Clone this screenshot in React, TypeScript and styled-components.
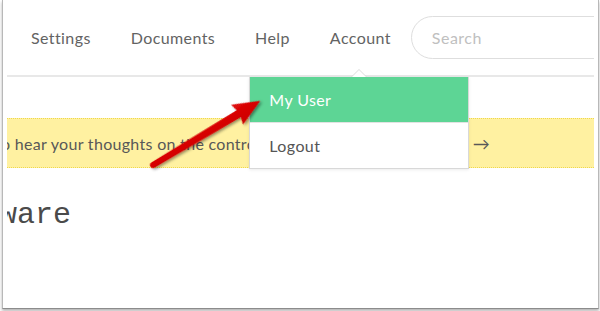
import React from "react";
import styled, { createGlobalStyle } from "styled-components";

const GlobalStyle = createGlobalStyle`
  html, body {
    margin: 0;
    padding: 0;
    background: #ffffff;
  }
  body {
    font-family: Lato, "Open Sans", "Liberation Sans", sans-serif;
  }
`;

const Stage = styled.div`
  position: relative;
  width: 600px;
  height: 311px;
  overflow: hidden;
`;

// the captured browser window: cropped on top, framed on the other sides
const Window = styled.div`
  box-sizing: border-box;
  width: 597px;
  height: 309px;
  margin-left: 2px;
  border: 1px solid #b8b8b8;
  border-top: none;
  border-bottom-color: #8c8c8c;
  box-shadow: 0 2px 3px rgba(0, 0, 0, 0.3);
  background: #fff;
  padding: 0 4px;
`;

const Page = styled.div`
  height: 100%;
  overflow: hidden;
`;

const Header = styled.header`
  display: flex;
  align-items: stretch;
  height: 75px;
  padding-left: 24px;
  border-bottom: 2px solid #e8e8e8;
`;

const Nav = styled.nav`
  display: flex;
  gap: 40px;
`;

const NavItem = styled.div`
  position: relative;
  display: flex;
  align-items: center;
  font-size: 16px;
  color: #636363;
  letter-spacing: 0.4px;
`;

const Search = styled.input`
  align-self: center;
  flex-shrink: 0;
  box-sizing: border-box;
  width: 240px;
  height: 43px;
  margin-left: 20px;
  padding: 0 20px;
  border: 1px solid #dedede;
  border-radius: 22px;
  font-family: inherit;
  font-size: 16px;
  letter-spacing: 0.5px;
  color: #555;
  outline: none;
  &::placeholder {
    color: #c0c0c0;
  }
`;

const Dropdown = styled.div`
  position: absolute;
  z-index: 5;
  top: calc(100% + 2px);
  left: 50%;
  transform: translateX(-50%);
  margin-left: -1px;
  width: 218px;
  background: #fff;
  border: 1px solid #d8d8d8;
  border-top: none;
  box-shadow: 0 1px 3px rgba(0, 0, 0, 0.08);
  letter-spacing: 0.4px;

  &::before,
  &::after {
    content: "";
    position: absolute;
    left: 50%;
    transform: translateX(-50%);
    border-style: solid;
    border-color: transparent;
  }
  &::before {
    top: -8px;
    border-width: 0 8px 8px;
    border-bottom-color: #dcdcdc;
  }
  &::after {
    top: -7px;
    border-width: 0 7px 7px;
    border-bottom-color: #fff;
  }
`;

const MenuItem = styled.div<{ active?: boolean }>`
  display: flex;
  align-items: center;
  height: 45px;
  padding-left: 19px;
  font-size: 16px;
  background: ${(p) => (p.active ? "#5dd595" : "#fff")};
  color: ${(p) => (p.active ? "#fff" : "#555")};
  border-top: ${(p) => (p.active ? "none" : "1px solid #e2e2e2")};
`;

const Banner = styled.div`
  display: flex;
  align-items: center;
  box-sizing: border-box;
  height: 50px;
  margin-top: 41px;
  padding-right: 104px;
  background: #fff1a1;
  border-top: 1px dotted #efd84e;
  border-bottom: 1px dotted #efd84e;
  font-size: 16px;
  letter-spacing: 0.3px;
  color: #585858;
  white-space: nowrap;
  overflow: hidden;
`;

const BannerText = styled.span`
  margin-left: -12px;
  flex: 1;
  overflow: hidden;
`;

const BannerArrow = styled.span`
  font-size: 17px;
`;

const Code = styled.div`
  margin-top: 30px;
  margin-left: -8px;
  font-family: "Liberation Mono", "Courier New", monospace;
  font-size: 30px;
  color: #4a4a4a;
  white-space: nowrap;
`;

const Annotation = styled.svg`
  position: absolute;
  left: 0;
  top: 0;
  pointer-events: none;
  z-index: 10;
`;

const RedArrow = () => (
  <Annotation width="600" height="311" viewBox="0 0 600 311">
    <defs>
      <linearGradient id="arrowRed" x1="0" y1="-1" x2="0" y2="1">
        <stop offset="0" stopColor="#f41212" />
        <stop offset="1" stopColor="#cc0000" />
      </linearGradient>
      <filter id="arrowShadow" x="-20%" y="-40%" width="140%" height="180%">
        <feDropShadow dx="1" dy="2" stdDeviation="1.5" floodColor="#000" floodOpacity="0.45" />
      </filter>
    </defs>
    <g transform="translate(153 165) rotate(-30.9)" filter="url(#arrowShadow)">
      <path
        d="M0 -3 L100 -4 L98 -11.5 L125 0 L98 11.5 L100 4 L0 3 A3 3 0 0 1 0 -3 Z"
        fill="url(#arrowRed)"
      />
    </g>
  </Annotation>
);

export default function App() {
  return (
    <>
      <GlobalStyle />
      <Stage>
        <Window>
          <Page>
            <Header>
              <Nav>
                <NavItem>Settings</NavItem>
                <NavItem>Documents</NavItem>
                <NavItem>Help</NavItem>
                <NavItem>
                  Account
                  <Dropdown>
                    <MenuItem active>My User</MenuItem>
                    <MenuItem>Logout</MenuItem>
                  </Dropdown>
                </NavItem>
              </Nav>
              <Search placeholder="Search" />
            </Header>
            <Banner>
              <BannerText>to hear your thoughts on the control panel, let us know</BannerText>
              <BannerArrow>→</BannerArrow>
            </Banner>
            <Code>ware</Code>
          </Page>
        </Window>
        <RedArrow />
      </Stage>
    </>
  );
}
